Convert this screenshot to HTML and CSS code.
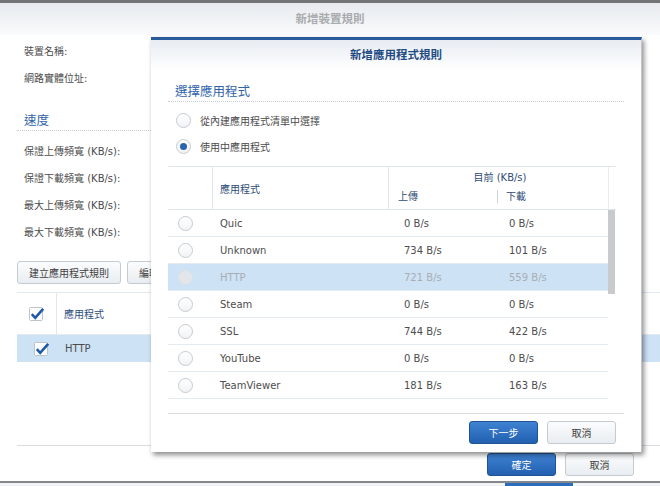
FILE: index.html
```html
<!DOCTYPE html>
<html lang="zh-Hant">
<head>
<meta charset="utf-8">
<title>新增裝置規則</title>
<link rel="stylesheet" href="styles.css">
</head>
<body>
<div class="win">
  <div class="win-top"></div>
  <div class="win-head">新增裝置規則</div>
  <div class="win-body">
    <div class="field"><span class="lbl">裝置名稱:</span></div>
    <div class="field"><span class="lbl">網路實體位址:</span></div>
    <div class="sec-title">速度</div>
    <div class="fields">
      <div class="field"><span class="lbl">保證上傳頻寬 (KB/s):</span></div>
      <div class="field"><span class="lbl">保證下載頻寬 (KB/s):</span></div>
      <div class="field"><span class="lbl">最大上傳頻寬 (KB/s):</span></div>
      <div class="field"><span class="lbl">最大下載頻寬 (KB/s):</span></div>
    </div>
    <div class="toolbar">
      <button class="btn">建立應用程式規則</button>
      <button class="btn">編輯</button>
    </div>
    <div class="bg-table">
      <div class="bg-head">
        <div class="bg-chk-col">
          <svg class="chk" width="16" height="16" viewBox="0 0 16 16"><rect x="0.5" y="1.5" width="13" height="13" rx="1" fill="#fff" stroke="#bcc3cb"/><path d="M2.8 8.2 L6.2 11.8 L14.2 2.8" fill="none" stroke="#1d59a8" stroke-width="2.6" stroke-linejoin="miter"/></svg>
        </div>
        <div class="bg-app-col">應用程式</div>
      </div>
      <div class="bg-row sel">
        <div class="bg-chk-col row-chk">
          <svg class="chk" width="16" height="16" viewBox="0 0 16 16"><rect x="0.5" y="1.5" width="13" height="13" rx="1" fill="#fff" stroke="#bcc3cb"/><path d="M2.8 8.2 L6.2 11.8 L14.2 2.8" fill="none" stroke="#1d59a8" stroke-width="2.6" stroke-linejoin="miter"/></svg>
        </div>
        <div class="bg-app">HTTP</div>
      </div>
    </div>
  </div>
  <div class="win-foot">
    <button class="btn btn-blue">確定</button>
    <button class="btn">取消</button>
  </div>
  <div class="win-bottom"><span class="peek-blue"></span></div>
</div>

<div class="modal">
  <div class="modal-head">新增應用程式規則</div>
  <div class="modal-body">
    <div class="sec-title m-sec">選擇應用程式</div>
    <div class="radios">
      <div class="radio-row"><span class="radio"></span><span>從內建應用程式清單中選擇</span></div>
      <div class="radio-row"><span class="radio on"></span><span>使用中應用程式</span></div>
    </div>
    <div class="grid-wrap">
      <div class="ghead">
        <div class="gh-radio"></div>
        <div class="gh-app">應用程式</div>
        <div class="gh-now">目前 (KB/s)</div>
        <div class="gh-up">上傳</div>
        <div class="gh-down">下載</div>
        <div class="gh-scroll"></div>
      </div>
      <div class="gbody">
        <div class="rows">
          <div class="grow"><div class="c-radio"><span class="radio"></span></div><div class="c-app">Quic</div><div class="c-up">0 B/s</div><div class="c-down">0 B/s</div></div>
          <div class="grow"><div class="c-radio"><span class="radio"></span></div><div class="c-app">Unknown</div><div class="c-up">734 B/s</div><div class="c-down">101 B/s</div></div>
          <div class="grow sel dis"><div class="c-radio"><span class="radio"></span></div><div class="c-app">HTTP</div><div class="c-up">721 B/s</div><div class="c-down">559 B/s</div></div>
          <div class="grow"><div class="c-radio"><span class="radio"></span></div><div class="c-app">Steam</div><div class="c-up">0 B/s</div><div class="c-down">0 B/s</div></div>
          <div class="grow"><div class="c-radio"><span class="radio"></span></div><div class="c-app">SSL</div><div class="c-up">744 B/s</div><div class="c-down">422 B/s</div></div>
          <div class="grow"><div class="c-radio"><span class="radio"></span></div><div class="c-app">YouTube</div><div class="c-up">0 B/s</div><div class="c-down">0 B/s</div></div>
          <div class="grow"><div class="c-radio"><span class="radio"></span></div><div class="c-app">TeamViewer</div><div class="c-up">181 B/s</div><div class="c-down">163 B/s</div></div>
        </div>
        <div class="scroll"><div class="thumb"></div></div>
      </div>
    </div>
    <div class="modal-foot">
      <button class="btn btn-blue">下一步</button>
      <button class="btn">取消</button>
    </div>
  </div>
</div>
</body>
</html>
```

FILE: styles.css
```css
* { box-sizing: border-box; }
html, body { margin: 0; padding: 0; }
body {
  width: 660px;
  height: 486px;
  overflow: hidden;
  position: relative;
  background: #fff;
  font-family: "DejaVu Sans", "Noto Sans CJK TC", sans-serif;
  font-size: 10px;
  color: #4b4b4b;
}

.win {
  width: 660px;
  height: 486px;
  display: flex;
  flex-direction: column;
}
.win-top { height: 3px; background: #727476; }
.win-head {
  height: 32px;
  background: linear-gradient(#e6eaef, #fafbfc);
  text-align: center;
  line-height: 32px;
  font-weight: bold;
  font-size: 11.5px;
  color: #a9abae;
}
.win-body {
  padding: 2px 0 0 17px;
  display: flex;
  flex-direction: column;
}
.field {
  height: 27px;
  display: flex;
  align-items: center;
  padding-left: 7px;
}
.sec-title {
  margin-top: 20px;
  height: 20px;
  line-height: 19px;
  padding-left: 7px;
  font-size: 12.5px;
  color: #2f63aa;
  border-bottom: 1px dotted #c9ced4;
  width: 200px;
}
.fields { margin-top: 6px; }
.toolbar {
  margin-top: 16px;
  display: flex;
  gap: 6px;
}
.btn {
  height: 23px;
  padding: 0 11px;
  font-family: "DejaVu Sans", "Noto Sans CJK TC", sans-serif;
  font-size: 10px;
  color: #404040;
  background: linear-gradient(#fbfcfd, #e9edf1);
  border: 1px solid #c4cbd3;
  border-radius: 3px;
  cursor: default;
}
.btn-blue {
  color: #fff;
  background: linear-gradient(#3f82d2, #2260b0);
  border-color: #1f5396;
}
.bg-table {
  margin-top: 8px;
  height: 154px;
  border-top: 1px solid #e2e8ef;
  border-bottom: 1px solid #d9dde2;
}
.bg-head {
  height: 42px;
  display: flex;
  border-bottom: 1px solid #e4eaf0;
}
.bg-chk-col {
  width: 40px;
  display: flex;
  align-items: center;
  padding-left: 12px;
}
.bg-head .bg-chk-col { border-right: 1px solid #e2e8ef; }
.bg-app-col {
  display: flex;
  align-items: center;
  padding-left: 7px;
  color: #2d4d7a;
}
.bg-row {
  height: 27px;
  display: flex;
  align-items: center;
}
.bg-row.sel { background: #cde2f5; }
.row-chk { padding-left: 17px; }
.bg-app { padding-left: 8px; color: #4b4b4b; }
.chk { display: block; }

.win-foot {
  margin-top: 7px;
  display: flex;
  justify-content: flex-end;
  gap: 9px;
  padding-right: 26px;
}
.win-foot .btn, .modal-foot .btn { width: 69px; padding: 0; }
.win-bottom {
  margin-top: 5px;
  height: 5px;
  border-top: 2px solid #85888b;
  background: #f2f3f4;
  position: relative;
}
.peek-blue {
  position: absolute;
  left: 505px;
  top: 0;
  width: 68px;
  height: 3px;
  background: #2d6bbd;
}

.modal {
  position: absolute;
  left: 151px;
  top: 37px;
  width: 491px;
  height: 415px;
  background: #fff;
  border-top: 3px solid #2a5b9b;
  border-right: 1px solid #c2c5c9;
  box-shadow: 2px 3px 5px rgba(0, 0, 0, 0.45);
}
.modal-head {
  height: 30px;
  line-height: 30px;
  text-align: center;
  font-weight: bold;
  font-size: 11.5px;
  color: #1f4b84;
  background: linear-gradient(#e7ecf2, #ffffff);
}
.modal-body {
  padding: 0 17px 0 17px;
}
.m-sec {
  margin-top: 12px;
  width: 456px;
  height: 20px;
}
.radios { margin-top: 5px; }
.radio-row {
  height: 26px;
  display: flex;
  align-items: center;
  gap: 9px;
  padding-left: 8px;
}
.radio {
  display: inline-block;
  width: 15px;
  height: 15px;
  border-radius: 50%;
  border: 1px solid #c6cbd1;
  background: linear-gradient(#ffffff, #f1f3f5);
  position: relative;
  flex: none;
}
.radio.on::after {
  content: "";
  position: absolute;
  left: 3px;
  top: 3px;
  width: 7px;
  height: 7px;
  border-radius: 50%;
  background: #2a63ae;
}

.grid-wrap {
  margin-top: 7px;
  width: 448px;
}
.ghead {
  display: grid;
  grid-template-columns: 44px 176px 109px 111px 8px;
  grid-template-rows: 21px 21px;
  border-top: 1px solid #dfe6ee;
  border-bottom: 1px solid #dfe6ee;
  color: #2e4c76;
}
.gh-radio { grid-row: 1 / 3; grid-column: 1; }
.gh-app {
  grid-row: 1 / 3;
  grid-column: 2;
  border-left: 1px solid #dfe6ee;
  display: flex;
  align-items: center;
  padding-left: 7px;
}
.gh-now {
  grid-row: 1;
  grid-column: 3 / 5;
  border-left: 1px solid #dfe6ee;
  text-align: center;
  line-height: 21px;
  padding-left: 3px;
}
.gh-up {
  grid-row: 2;
  grid-column: 3;
  border-left: 1px solid #dfe6ee;
  padding-left: 9px;
  line-height: 17px;
}
.gh-down {
  grid-row: 2;
  grid-column: 4;
  padding-left: 9px;
  line-height: 17px;
  position: relative;
}
.gh-down::before {
  content: "";
  position: absolute;
  left: 0;
  top: 2px;
  height: 13px;
  border-left: 1px solid #cfd3d8;
}
.gh-scroll {
  grid-row: 1 / 3;
  grid-column: 5;
  border-left: 1px solid #e8edf2;
}
.gbody {
  display: flex;
  height: 203px;
}
.rows { width: 440px; }
.grow {
  display: grid;
  grid-template-columns: 44px 176px 109px 111px;
  height: 27px;
  border-bottom: 1px solid #e3eaf2;
  align-items: center;
  color: #4d4d4d;
}
.c-radio { padding-left: 10px; display: flex; }
.c-app { padding-left: 8px; }
.c-up { padding-left: 16px; }
.c-down { padding-left: 12px; }
.grow.sel { background: #cde2f5; }
.grow.dis { color: #a9adb2; }
.grow.dis .radio { background: #e2e6ea; border-color: #dde1e5; }
.scroll { width: 8px; }
.thumb { height: 84px; background: #c9cacc; width: 7px; }

.modal-foot {
  width: 456px;
  border-top: 1px solid #d9dde2;
  padding: 7px 8px 7px 0;
  display: flex;
  justify-content: flex-end;
  gap: 9px;
}
```
